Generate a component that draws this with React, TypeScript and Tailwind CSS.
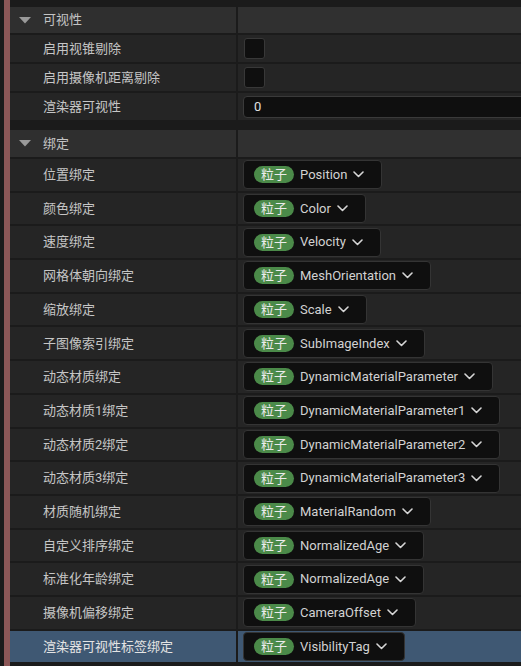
import React from 'react';

const bindings: [string, string][] = [
  ['位置绑定', 'Position'],
  ['颜色绑定', 'Color'],
  ['速度绑定', 'Velocity'],
  ['网格体朝向绑定', 'MeshOrientation'],
  ['缩放绑定', 'Scale'],
  ['子图像索引绑定', 'SubImageIndex'],
  ['动态材质绑定', 'DynamicMaterialParameter'],
  ['动态材质1绑定', 'DynamicMaterialParameter1'],
  ['动态材质2绑定', 'DynamicMaterialParameter2'],
  ['动态材质3绑定', 'DynamicMaterialParameter3'],
  ['材质随机绑定', 'MaterialRandom'],
  ['自定义排序绑定', 'NormalizedAge'],
  ['标准化年龄绑定', 'NormalizedAge'],
  ['摄像机偏移绑定', 'CameraOffset'],
  ['渲染器可视性标签绑定', 'VisibilityTag'],
];

function Triangle() {
  return (
    <svg width="12" height="7" viewBox="0 0 12 7" className="ml-[9px]">
      <path d="M0 0 L12 0 L6 6.5 Z" fill="#9a9a9a" />
    </svg>
  );
}

function Chevron() {
  return (
    <svg width="11" height="7" viewBox="0 0 11 7" className="ml-[6px] shrink-0">
      <path d="M1 1 L5.5 5.5 L10 1" fill="none" stroke="#d6d6d6" strokeWidth="1.6" strokeLinecap="round" strokeLinejoin="round" />
    </svg>
  );
}

function Header({ title, className = '' }: { title: string; className?: string }) {
  return (
    <div className={`flex gap-[2px] ${className}`}>
      <div className="w-[226px] bg-[#2f2f2f] flex items-center">
        <Triangle />
        <span className="ml-[12px] text-[#c4c4c4]">{title}</span>
      </div>
      <div className="flex-1 bg-[#303030]" />
    </div>
  );
}

function Row({ label, h, active, children }: { label: string; h: string; active?: boolean; children: React.ReactNode }) {
  const bg = active ? 'bg-[#3f5873]' : 'bg-[#252525]';
  return (
    <div className={`flex gap-[2px] ${h}`}>
      <div className={`w-[226px] ${bg} flex items-center pl-[33px] ${active ? 'text-[#e4e4e4]' : 'text-[#c6c6c6]'}`}>
        {label}
      </div>
      <div className={`flex-1 ${bg} flex items-center pl-[5px] overflow-hidden`}>{children}</div>
    </div>
  );
}

function Binding({ name }: { name: string }) {
  return (
    <div className="h-[29px] flex items-center bg-[#0f0f0f] border border-[#343434] rounded-[4px] pl-[10px] pr-[17px]">
      <span className="h-[17px] px-[7px] rounded-full bg-[#4b8a49] text-[#ececec] flex items-center leading-none">粒子</span>
      <span className="ml-[6px] text-[#d2d2d2] whitespace-nowrap">{name}</span>
      <Chevron />
    </div>
  );
}

export default function App() {
  return (
    <div
      className="w-[521px] h-[666px] bg-[#1b1b1b] flex overflow-hidden text-[13px]"
      style={{ fontFamily: "Roboto, 'Noto Sans CJK SC', sans-serif" }}
    >
      <div className="w-[4px] shrink-0" />
      <div className="w-[6px] shrink-0 bg-[#8c5757]" />
      <div className="flex-1 flex flex-col gap-[2px] pt-[7px]">
        <Header title="可视性" className="h-[26px]" />
        <Row label="启用视锥剔除" h="h-[27px]">
          <div className="w-[21px] h-[21px] ml-[1px] rounded-[3px] bg-[#0f0f0f] border border-[#383838]" />
        </Row>
        <Row label="启用摄像机距离剔除" h="h-[27px]">
          <div className="w-[21px] h-[21px] ml-[1px] rounded-[3px] bg-[#0f0f0f] border border-[#383838]" />
        </Row>
        <Row label="渲染器可视性" h="h-[27px]">
          <div className="w-[320px] h-[22px] shrink-0 rounded-[4px] bg-[#0f0f0f] border border-[#3a3a3a] flex items-center pl-[10px] text-[#e0e0e0]">
            0
          </div>
        </Row>

        <Header title="绑定" className="h-[27px] mt-[8px]" />
        {bindings.map(([label, name], i) => (
          <Row key={i} label={label} h="h-[31.7px]" active={i === bindings.length - 1}>
            <Binding name={name} />
          </Row>
        ))}
      </div>
    </div>
  );
}
